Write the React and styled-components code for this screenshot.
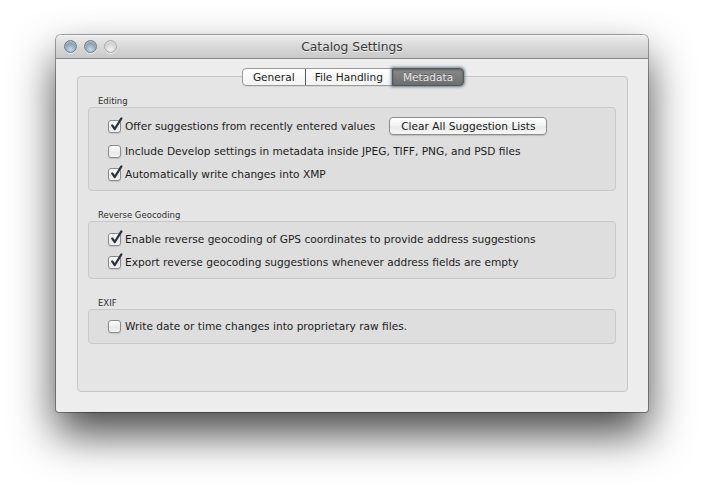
import React from "react";
import styled, { createGlobalStyle } from "styled-components";

const Global = createGlobalStyle`
  html, body { margin: 0; padding: 0; background: #ffffff; }
  body { font-family: "DejaVu Sans", "Liberation Sans", sans-serif; }
  #root { width: 704px; height: 491px; overflow: hidden; }
`;

const Page = styled.div`
  padding: 35px 0 0 56px;
`;

const Window = styled.div`
  width: 592px;
  height: 377px;
  display: flex;
  flex-direction: column;
  background: #ededed;
  border-radius: 5px 5px 3px 3px;
  box-shadow: 0 0 0 1px rgba(0, 0, 0, 0.34), 0 22px 44px rgba(0, 0, 0, 0.72);
  overflow: hidden;
`;

const TitleBar = styled.div`
  position: relative;
  height: 22px;
  flex: none;
  display: flex;
  align-items: center;
  justify-content: center;
  background: linear-gradient(#ebebeb, #d6d6d6 55%, #c9c9c9);
  border-bottom: 1px solid #878787;
  border-top: 1px solid #f6f6f6;
`;

const Lights = styled.div`
  position: absolute;
  left: 8px;
  top: 4px;
  display: flex;
  gap: 7px;
`;

const Light = styled.span`
  width: 13px;
  height: 13px;
  border-radius: 50%;
  box-sizing: border-box;
  border: 1px solid ${(p) => (p.$off ? "#a9a9a9" : "#6d7f8e")};
  background: ${(p) =>
    p.$off
      ? "radial-gradient(circle at 50% 75%, #f2f2f2 0%, #d4d4d4 55%, #bcbcbc 100%)"
      : "radial-gradient(circle at 50% 78%, #c9dae6 0%, #93a9b9 50%, #6f8597 100%)"};
  box-shadow: inset 0 1px 1px rgba(255, 255, 255, 0.5), 0 1px 0 rgba(255, 255, 255, 0.6);
`;

const Title = styled.div`
  font-size: 12.3px;
  color: #3a3a3a;
  text-shadow: 0 1px 0 rgba(255, 255, 255, 0.6);
`;

const Body = styled.div`
  flex: 1;
  display: flex;
  flex-direction: column;
  padding: 9px 20px 20px 21px;
`;

const TabBar = styled.div`
  position: relative;
  z-index: 1;
  display: flex;
  justify-content: center;
  margin-bottom: -10px;
  padding-left: 1px;
`;

const TabGroup = styled.div`
  display: flex;
  height: 18px;
  box-sizing: border-box;
  border: 1px solid #9a9a9a;
  border-radius: 4px;
  background: linear-gradient(#ffffff, #f3f3f3);
  box-shadow: 0 1px 0 rgba(0, 0, 0, 0.06);
`;

const Tab = styled.div`
  position: relative;
  display: flex;
  align-items: center;
  padding: 0 ${(p) => p.$pad}px;
  font-size: 10.6px;
  color: ${(p) => (p.$active ? "#e9e9e9" : "#1b1b1b")};
  ${(p) =>
    p.$active
      ? `
    margin: -1px -1px -1px 0;
    border-radius: 0 4px 4px 0;
    background: linear-gradient(#8a8a8a, #6e6e6e);
    border: 1px solid #4f5a63;
    box-shadow: 0 0 3px 1px rgba(70, 95, 115, 0.75), inset 0 1px 2px rgba(0,0,0,0.35);
    text-shadow: 0 -1px 0 rgba(0,0,0,0.35);
  `
      : ""}
  & + & {
    border-left: ${(p) => (p.$active ? "1px solid #4f5a63" : "1px solid #cfcfcf")};
  }
`;

const TabBox = styled.div`
  flex: 1;
  box-sizing: border-box;
  border: 1px solid #c6c6c6;
  border-radius: 4px;
  background: #e5e5e5;
  padding: 18px 11px 0 10px;
`;

const SectionLabel = styled.div`
  font-size: 8.5px;
  line-height: 12px;
  height: 12px;
  color: #2e2e2e;
  margin: ${(p) => (p.$first ? "0" : "18px")} 0 0 10px;
`;

const Group = styled.div`
  box-sizing: border-box;
  border: 1px solid #c9c9c9;
  border-radius: 4px;
  background: #dedede;
  padding: ${(p) => p.$pt}px 0 ${(p) => p.$pb}px 19px;
`;

const Row = styled.div`
  display: flex;
  align-items: center;
  height: 22px;
  margin-top: ${(p) => p.$mt || 0}px;
  font-size: 10.6px;
  color: #1c1c1c;
`;

const Box = styled.span`
  position: relative;
  flex: none;
  width: 13px;
  height: 13px;
  box-sizing: border-box;
  border: 1px solid #8a8a8a;
  border-radius: 3px;
  background: linear-gradient(#ffffff, #e9e9e9 60%, #f4f4f4);
  box-shadow: 0 1px 1px rgba(0, 0, 0, 0.12);
  margin-right: 4px;
`;

const Check = styled.svg`
  position: absolute;
  left: 1px;
  top: -4px;
  width: 13px;
  height: 14px;
  overflow: visible;
`;

const Button = styled.div`
  margin-left: 14px;
  width: 158px;
  height: 18px;
  box-sizing: border-box;
  border: 1px solid #8d8d8d;
  border-radius: 4px;
  background: linear-gradient(#ffffff, #f1f1f1 50%, #e9e9e9 51%, #f7f7f7);
  box-shadow: 0 1px 1px rgba(0, 0, 0, 0.15);
  display: flex;
  align-items: center;
  justify-content: center;
  font-size: 10.6px;
  color: #1a1a1a;
`;

function CheckBox({ checked }) {
  return (
    <Box>
      {checked && (
        <Check viewBox="0 0 13 14">
          <path
            d="M2.2 8.4 L4.8 12 L11.4 1.4"
            fill="none"
            stroke="#2b3440"
            strokeWidth="2.3"
            strokeLinecap="round"
            strokeLinejoin="round"
          />
        </Check>
      )}
    </Box>
  );
}

function Option({ checked, children, mt, extra }) {
  return (
    <Row $mt={mt}>
      <CheckBox checked={checked} />
      <span>{children}</span>
      {extra}
    </Row>
  );
}

export default function App() {
  return (
    <>
      <Global />
      <Page>
        <Window>
          <TitleBar>
            <Lights>
              <Light />
              <Light />
              <Light $off />
            </Lights>
            <Title>Catalog Settings</Title>
          </TitleBar>
          <Body>
            <TabBar>
              <TabGroup>
                <Tab $pad={10}>General</Tab>
                <Tab $pad={9}>File Handling</Tab>
                <Tab $pad={10} $active>
                  Metadata
                </Tab>
              </TabGroup>
            </TabBar>
            <TabBox>
              <SectionLabel $first>Editing</SectionLabel>
              <Group $pt={7} $pb={5}>
                <Option checked extra={<Button>Clear All Suggestion Lists</Button>}>
                  Offer suggestions from recently entered values
                </Option>
                <Option mt={3}>
                  Include Develop settings in metadata inside JPEG, TIFF, PNG, and PSD files
                </Option>
                <Option checked mt={1}>Automatically write changes into XMP</Option>
              </Group>

              <SectionLabel>Reverse Geocoding</SectionLabel>
              <Group $pt={6} $pb={5}>
                <Option checked>
                  Enable reverse geocoding of GPS coordinates to provide address suggestions
                </Option>
                <Option checked mt={1}>
                  Export reverse geocoding suggestions whenever address fields are empty
                </Option>
              </Group>

              <SectionLabel>EXIF</SectionLabel>
              <Group $pt={5} $pb={6}>
                <Option>Write date or time changes into proprietary raw files.</Option>
              </Group>
            </TabBox>
          </Body>
        </Window>
      </Page>
    </>
  );
}
